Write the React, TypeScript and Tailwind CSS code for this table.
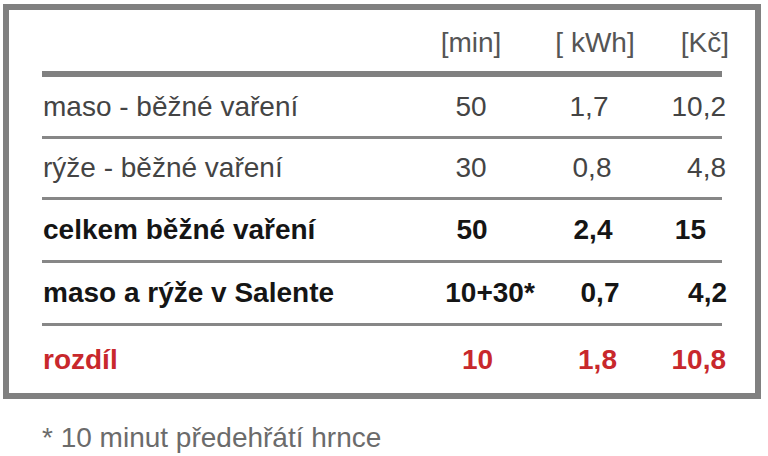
const rows = [
  {
    label: 'maso - běžné vaření',
    tone: 'text-[#444444] font-normal',
    cells: [
      { v: '50', cls: '' },
      { v: '1,7', cls: 'mr-[12px]' },
      { v: '10,2', cls: 'mr-[3px]' },
    ],
    h: 'h-[59px]',
  },
  {
    label: 'rýže - běžné vaření',
    tone: 'text-[#444444] font-normal',
    cells: [
      { v: '30', cls: '' },
      { v: '0,8', cls: 'mr-[6px]' },
      { v: '4,8', cls: 'mr-[3px]' },
    ],
    h: 'h-[58px]',
  },
  {
    label: 'celkem běžné vaření',
    tone: 'text-[#151515] font-bold',
    cells: [
      { v: '50', cls: 'ml-[2px]' },
      { v: '2,4', cls: 'mr-[4px]' },
      { v: '15', cls: 'mr-[23px]' },
    ],
    h: 'h-[60px]',
  },
  {
    label: 'maso a rýže v Salente',
    tone: 'text-[#151515] font-bold',
    cells: [
      { v: '10+30*', cls: 'ml-[38px]' },
      { v: '0,7', cls: 'ml-[10px]' },
      { v: '4,2', cls: 'mr-[2px]' },
    ],
    h: 'h-[60px]',
  },
  {
    label: 'rozdíl',
    tone: 'text-[#c8282c] font-bold',
    cells: [
      { v: '10', cls: 'ml-[13px]' },
      { v: '1,8', cls: 'ml-[5px]' },
      { v: '10,8', cls: 'mr-[3px]' },
    ],
    h: 'flex-1',
  },
];

function Row({ row }: { row: (typeof rows)[number] }) {
  return (
    <div className={`flex items-center ${row.h} ${row.tone}`}>
      <div className="w-[379px] shrink-0 pl-[1px]">{row.label}</div>
      <div className="w-[100px] shrink-0 flex justify-center">
        <span className={`whitespace-nowrap ${row.cells[0].cls}`}>{row.cells[0].v}</span>
      </div>
      <div className="w-[148px] shrink-0 flex justify-center">
        <span className={`whitespace-nowrap ${row.cells[1].cls}`}>{row.cells[1].v}</span>
      </div>
      <div className="w-[60px] shrink-0 flex justify-end">
        <span className={`whitespace-nowrap ${row.cells[2].cls}`}>{row.cells[2].v}</span>
      </div>
    </div>
  );
}

export default function App() {
  return (
    <div className="w-[768px] h-[456px] overflow-hidden bg-white pt-[4px] pl-[3px] font-['Liberation_Sans',Arial,sans-serif] text-[28px] leading-none">
      {/* Table box */}
      <div className="w-[758px] h-[395px] border-[6px] border-[#808080] pl-[33px] flex flex-col">
        {/* Header */}
        <div className="h-[61px] shrink-0 flex items-end pb-[14px] text-[#555555]">
          <div className="w-[379px] shrink-0" />
          <div className="w-[100px] shrink-0 text-center">[min]</div>
          <div className="w-[148px] shrink-0 text-center">[ kWh]</div>
          <div className="w-[60px] shrink-0 text-right whitespace-nowrap">[Kč]</div>
        </div>
        <div className="h-[6px] w-[680px] shrink-0 bg-[#808080]" />
        {rows.map((row, i) => (
          <div key={row.label} className={i === rows.length - 1 ? 'flex-1 flex flex-col' : 'shrink-0'}>
            <Row row={row} />
            {i < rows.length - 1 && <div className="h-[3px] w-[680px] bg-[#878787]" />}
          </div>
        ))}
      </div>

      {/* Footnote */}
      <div className="pl-[39px] pt-[25px] text-[#6b6b6b] whitespace-nowrap">* 10 minut předehřátí hrnce</div>
    </div>
  );
}
